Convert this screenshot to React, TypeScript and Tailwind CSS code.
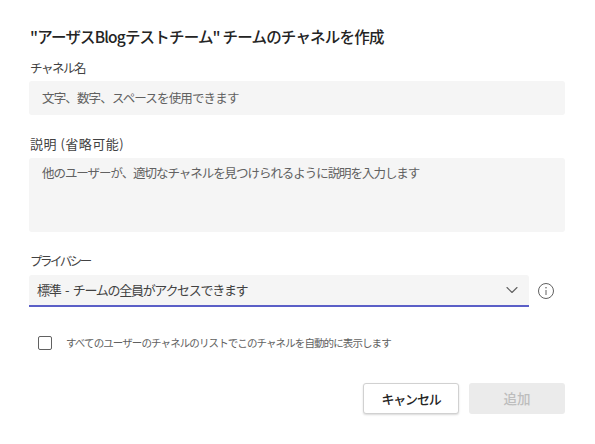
import React from 'react';
import { ChevronDown } from 'lucide-react';

const font = { fontFamily: '"Noto Sans CJK JP", "Noto Sans", sans-serif' };

export default function App() {
  return (
    <div className="w-[595px] h-[444px] bg-white overflow-hidden pl-[29px] pr-[30px] pt-[25px] text-[#242424]" style={font}>
      <h1 className="text-[15.5px] leading-[22px] font-medium tracking-[-0.8px] pl-px">"アーザスBlogテストチーム" チームのチャネルを作成</h1>

      {/* channel name */}
      <label className="block mt-[14px] text-[12.5px] leading-[14px] tracking-[-1.5px] text-[#424242] pl-px">チャネル名</label>
      <div className="mt-[6px] h-[34px] bg-[#f5f5f5] rounded-[3px] pl-[13px] flex items-center text-[12.5px] tracking-[-0.85px] text-[#616161]">
        文字、数字、スペースを使用できます
      </div>

      {/* description */}
      <label className="block mt-[22px] text-[13px] leading-[14px] tracking-[0.5px] text-[#424242] pl-px">説明 (省略可能)</label>
      <div className="mt-[7px] h-[74px] bg-[#f5f5f5] rounded-[3px] pl-[13px] pt-[6px] text-[12.5px] leading-[18px] tracking-[-1.05px] text-[#616161]">
        他のユーザーが、適切なチャネルを見つけられるように説明を入力します
      </div>

      {/* privacy */}
      <label className="block mt-[22px] text-[12.5px] leading-[14px] tracking-[-2.5px] text-[#424242] pl-px">プライバシー</label>
      <div className="mt-[7px] flex items-center">
        <div className="w-[500px] h-[32px] bg-[#f5f5f5] rounded-t-[3px] border-b-2 border-[#5b5fc7] pl-[8px] pr-[7px] flex items-center justify-between text-[13px] tracking-[-1.3px] [word-spacing:3px] text-[#424242]">
          <span>標準 - チームの全員がアクセスできます</span>
          <ChevronDown size={20} strokeWidth={1.3} className="text-[#616161]" />
        </div>
        <svg className="ml-[8px]" width="18" height="18" viewBox="0 0 18 18" fill="none">
          <circle cx="9" cy="9" r="7.5" stroke="#616161" strokeWidth="1" />
          <path d="M9 8v5" stroke="#616161" strokeWidth="1" />
          <circle cx="9" cy="5.7" r="0.8" fill="#616161" />
        </svg>
      </div>

      {/* auto show */}
      <div className="mt-[29px] ml-[9px] flex items-center">
        <div className="w-[14px] h-[14px] border border-[#616161] rounded-[2px] bg-white" />
        <span className="ml-[14px] -mt-px text-[10.5px] leading-[14px] tracking-[-0.9px] text-[#616161]">すべてのユーザーのチャネルのリストでこのチャネルを自動的に表示します</span>
      </div>

      {/* actions */}
      <div className="mt-[33px] flex justify-end gap-[10px]">
        <button className="w-[96px] h-[31px] bg-white border border-[#d1d1d1] rounded-[3px] shadow-[0_1px_2px_rgba(0,0,0,0.15)] text-[13px] font-medium tracking-[-1.2px] text-[#242424]">キャンセル</button>
        <button className="w-[96px] h-[31px] bg-[#ebebeb] rounded-[3px] text-[13.5px] font-medium text-[#bdbdbd]">追加</button>
      </div>
    </div>
  );
}
